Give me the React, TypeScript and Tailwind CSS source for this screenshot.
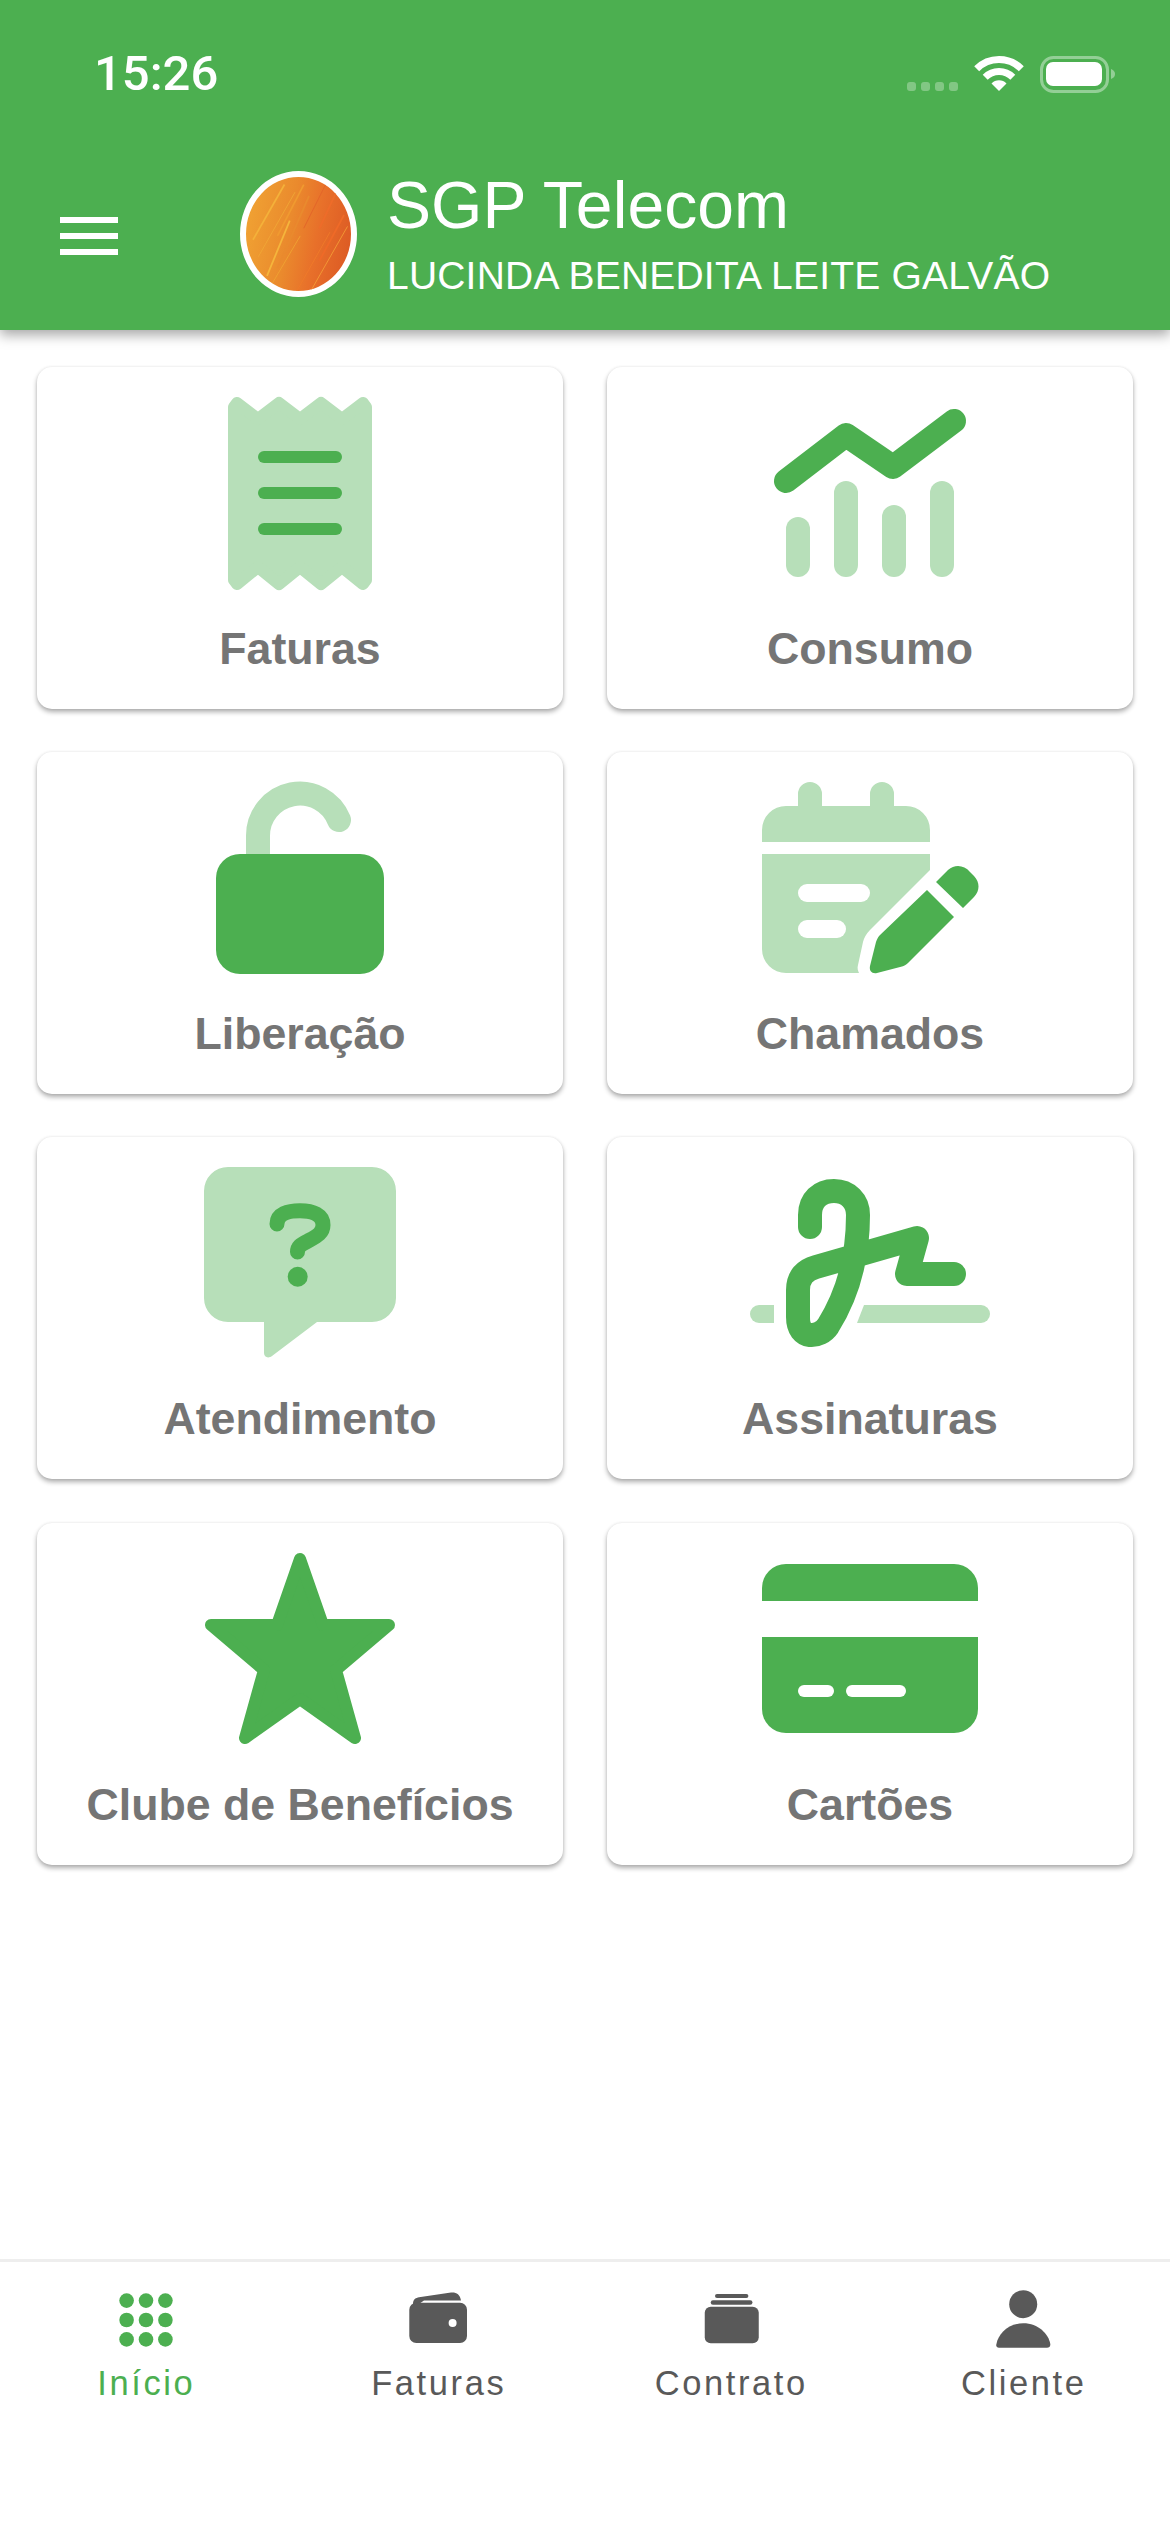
import type { ReactNode } from "react";

const GREEN = "#4caf50";
const LIGHT = "#b7dfb9";

const StatusIcons = () => (
  <svg width="220" height="50" viewBox="0 0 220 50" className="block">
    <g fill="#fff" fillOpacity="0.3">
      <rect x="7" y="32" width="9" height="9" rx="3" />
      <rect x="21" y="32" width="9" height="9" rx="3" />
      <rect x="35" y="32" width="9" height="9" rx="3" />
      <rect x="49" y="32" width="9" height="9" rx="3" />
    </g>
    <g fill="none" stroke="#fff" strokeWidth="7">
      <path d="M76.7 18.7A31.5 31.5 0 0 1 121.3 18.7" />
      <path d="M85.2 27.2A19.5 19.5 0 0 1 112.8 27.2" />
    </g>
    <path d="M99 41L91.5 33.5A10.5 10.5 0 0 1 106.5 33.5Z" fill="#fff" />
    <rect x="141.5" y="7.5" width="66" height="34" rx="12" fill="none" stroke="#fff" strokeOpacity="0.4" strokeWidth="3" />
    <rect x="146" y="12" width="56" height="24" rx="7" fill="#fff" />
    <path d="M211 19C214 20 215 22 215 24C215 26 214 28 211 29Z" fill="#fff" fillOpacity="0.4" />
  </svg>
);

const streaks: [number, number, number, number, string][] = [
  [8, 66, 44, 8, "#f4b13a"],
  [14, 84, 56, 16, "#f0a636"],
  [24, 104, 50, 46, "#f5b53c"],
  [30, 112, 62, 62, "#efa233"],
  [36, 96, 72, 20, "#e98a2e"],
  [58, 120, 96, 58, "#ee7a2a"],
  [66, 8, 36, 62, "#f09a30"],
  [74, 120, 116, 52, "#f39a36"],
  [84, 88, 112, 40, "#ef6a28"],
  [92, 6, 66, 54, "#e2642a"],
  [104, 14, 84, 54, "#ee6c2a"],
];

const Avatar = () => (
  <div className="h-[126px] w-[117px] shrink-0 overflow-hidden rounded-[50%] border-[6px] border-white bg-[linear-gradient(100deg,#f0a233_5%,#ea8a2d_42%,#e8702a_65%,#dc5a24_95%)]">
    <svg width="105" height="114" viewBox="0 0 120 120" preserveAspectRatio="none" className="block">
      {streaks.map(([x1, y1, x2, y2, c], i) => (
        <line key={i} x1={x1} y1={y1} x2={x2} y2={y2} stroke={c} strokeWidth={i % 2 ? 1 : 2} />
      ))}
    </svg>
  </div>
);

const IconBox = ({ children }: { children: ReactNode }) => (
  <svg width="240" height="216" viewBox="0 0 240 216" className="block shrink-0">
    {children}
  </svg>
);

const ReceiptIcon = () => (
  <IconBox>
    <path
      d="M54 28L57 24L78 40L99 24L120 40L141 24L162 40L183 24L186 28V201L183 205L162 188L141 205L120 188L99 205L78 188L57 205L54 201Z"
      fill={LIGHT}
      stroke={LIGHT}
      strokeWidth="12"
      strokeLinejoin="round"
    />
    <rect x="78" y="72" width="84" height="12" rx="6" fill={GREEN} />
    <rect x="78" y="108" width="84" height="12" rx="6" fill={GREEN} />
    <rect x="78" y="144" width="84" height="12" rx="6" fill={GREEN} />
  </IconBox>
);

const ChartIcon = () => (
  <IconBox>
    <path d="M36 102L96 56L143 88L204 42" fill="none" stroke={GREEN} strokeWidth="24" strokeLinecap="round" strokeLinejoin="round" />
    <g fill={LIGHT}>
      <rect x="36" y="138" width="24" height="60" rx="12" />
      <rect x="84" y="102" width="24" height="96" rx="12" />
      <rect x="132" y="126" width="24" height="72" rx="12" />
      <rect x="180" y="102" width="24" height="96" rx="12" />
    </g>
  </IconBox>
);

const LockIcon = () => (
  <IconBox>
    <path d="M78 95V72A42 42 0 0 1 159 56" fill="none" stroke={LIGHT} strokeWidth="24" strokeLinecap="round" />
    <rect x="36" y="90" width="168" height="120" rx="24" fill={GREEN} />
  </IconBox>
);

const NotesIcon = () => (
  <IconBox>
    <path
      d="M12 78V66A24 24 0 0 1 36 42H48V30A12 12 0 0 1 72 30V42H120V30A12 12 0 0 1 144 30V42H156A24 24 0 0 1 180 66V78Z"
      fill={LIGHT}
    />
    <path d="M12 90H180V106L120 166C116 170 114 174 113 178L108 201C107 204 108 207 109 209H36A24 24 0 0 1 12 185Z" fill={LIGHT} />
    <rect x="48" y="120" width="72" height="18" rx="9" fill="#fff" />
    <rect x="48" y="156" width="48" height="18" rx="9" fill="#fff" />
    <path d="M177 126L204 153L158 199C156 201 154 202 152 202.500L127 209C122 210 119 207 120 202L126 178C127 175 128 173 130 171Z" fill={GREEN} />
    <path d="M186 118L198 106C205 100 214 101 220 108L224 112C230 118 230 127 224 133L213 144Z" fill={GREEN} />
  </IconBox>
);

const HelpIcon = () => (
  <IconBox>
    <path
      d="M48 18H192A24 24 0 0 1 216 42V149A24 24 0 0 1 192 173H137L92 207C88 210 84 208 84 204V173H48A24 24 0 0 1 24 149V42A24 24 0 0 1 48 18Z"
      fill={LIGHT}
    />
    <path
      d="M97 75C97 65 108 61.700 120 61.700C133 61.700 143 66 143 76C143 84 137 87 128 92C120 96 117.500 98 117.500 103"
      fill="none"
      stroke={GREEN}
      strokeWidth="15"
      strokeLinecap="round"
    />
    <circle cx="117.700" cy="127.700" r="10" fill={GREEN} />
  </IconBox>
);

const SignIcon = () => (
  <IconBox>
    <path d="M24 156V174H9A9 9 0 0 1 9 156Z" fill={LIGHT} />
    <path d="M114 156H231A9 9 0 0 1 231 174H107Z" fill={LIGHT} />
    <path
      d="M60 78V66C60 51 70 42 84 42C98 42 108 52 108 66C108 110 98 145 78 177C70 189 48 192 48 168V141C48 128 55 121 66 118L167 89L157 125H204"
      fill="none"
      stroke={GREEN}
      strokeWidth="24"
      strokeLinecap="round"
      strokeLinejoin="round"
    />
  </IconBox>
);

const StarIcon = () => (
  <IconBox>
    <path
      d="M120 24L143 90H209L156 135L175 203L120 164L65 203L84 135L31 90H97Z"
      fill={GREEN}
      stroke={GREEN}
      strokeWidth="12"
      strokeLinejoin="round"
    />
  </IconBox>
);

const CardIcon = () => (
  <IconBox>
    <path d="M12 66V53A24 24 0 0 1 36 29H204A24 24 0 0 1 228 53V66Z" fill={GREEN} />
    <path d="M12 102H228V174A24 24 0 0 1 204 198H36A24 24 0 0 1 12 174Z" fill={GREEN} />
    <rect x="48" y="150" width="36" height="12" rx="6" fill="#fff" />
    <rect x="96" y="150" width="60" height="12" rx="6" fill="#fff" />
  </IconBox>
);

const tiles: { label: string; icon: ReactNode }[] = [
  { label: "Faturas", icon: <ReceiptIcon /> },
  { label: "Consumo", icon: <ChartIcon /> },
  { label: "Liberação", icon: <LockIcon /> },
  { label: "Chamados", icon: <NotesIcon /> },
  { label: "Atendimento", icon: <HelpIcon /> },
  { label: "Assinaturas", icon: <SignIcon /> },
  { label: "Clube de Benefícios", icon: <StarIcon /> },
  { label: "Cartões", icon: <CardIcon /> },
];

const HomeTab = () => (
  <svg width="72" height="72" viewBox="0 0 72 72" className="block" fill={GREEN}>
    {[16.6, 36, 55.4].map((y) =>
      [16.6, 36, 55.4].map((x) => <circle key={`${x}-${y}`} cx={x} cy={y} r="7.300" />)
    )}
  </svg>
);

const WalletTab = () => (
  <svg width="72" height="72" viewBox="0 0 72 72" className="block" fill="#595959">
    <path d="M10 20C10 15 13 14 16 13.300L48 8.500C53 8 57 10 58 16.500L21 16.500L10 24Z" />
    <path d="M13.300 18.700H57A7 7 0 0 1 64 25.700V52A7 7 0 0 1 57 59H13.300A7 7 0 0 1 6.300 52V25.700A7 7 0 0 1 13.300 18.700Z" />
    <circle cx="49.600" cy="39" r="4" fill="#fff" />
  </svg>
);

const FolderTab = () => (
  <svg width="72" height="72" viewBox="0 0 72 72" className="block" fill="#595959">
    <rect x="20" y="10" width="33.400" height="4" rx="2" />
    <rect x="15.750" y="16.300" width="41.700" height="4.400" rx="2.200" />
    <rect x="9.750" y="22.700" width="54" height="36.600" rx="6" />
  </svg>
);

const UserTab = () => (
  <svg width="72" height="72" viewBox="0 0 72 72" className="block" fill="#595959">
    <circle cx="35.200" cy="20.200" r="14" />
    <path d="M8.300 60.500C10 50 20 39.300 35.200 39.300C50.400 39.300 60.500 50 62.300 60C62.500 62.500 61 63.700 59 63.700H11C9 63.700 8 62.500 8.300 60.500Z" />
  </svg>
);

const tabs: { label: string; icon: ReactNode; active?: boolean }[] = [
  { label: "Início", icon: <HomeTab />, active: true },
  { label: "Faturas", icon: <WalletTab /> },
  { label: "Contrato", icon: <FolderTab /> },
  { label: "Cliente", icon: <UserTab /> },
];

export default function App() {
  return (
    <div className="flex h-[2532px] w-[1170px] flex-col overflow-hidden bg-white font-['Liberation_Sans',Arial,sans-serif]">
      <header className="relative z-10 flex h-[330px] flex-col justify-between bg-[#4caf50] text-white shadow-[0_5px_12px_rgba(0,0,0,0.35)]">
        <div className="flex items-start justify-between pt-[50px] pl-[94px] pr-[50px]">
          <span className="font-['Roboto',sans-serif] text-[49px] font-medium leading-[48px]">15:26</span>
          <StatusIcons />
        </div>
        <div className="flex items-center pb-[25px] pl-[60px]">
          <button className="mr-[122px] mt-[4px] flex w-[58px] flex-col gap-[10px]">
            <span className="h-[6px] bg-white" />
            <span className="h-[6px] bg-white" />
            <span className="h-[6px] bg-white" />
          </button>
          <Avatar />
          <div className="ml-[30px] flex flex-col pb-[6px]">
            <span className="text-[66px] leading-[84px] tracking-[0.1px]">SGP Telecom</span>
            <span className="mt-[6px] text-[39px] leading-[46px] tracking-[0.2px]">LUCINDA BENEDITA LEITE GALVÃO</span>
          </div>
        </div>
      </header>

      <main className="grid flex-1 grid-cols-2 content-start gap-x-[44px] gap-y-[43.2px] px-[37px] pt-[37px]">
        {tiles.map((t) => (
          <div
            key={t.label}
            className="flex h-[342px] flex-col items-center rounded-[15px] bg-white pt-[12px] shadow-[0_3px_5px_rgba(0,0,0,0.32),0_0_3px_rgba(0,0,0,0.07)]"
          >
            {t.icon}
            <span className="mt-[28px] text-[44.700px] font-bold leading-[52px] text-[#757575]">{t.label}</span>
          </div>
        ))}
      </main>

      <nav className="grid h-[273px] grid-cols-4 border-t-[3px] border-[#eeeeee] pt-[22px]">
        {tabs.map((t) => (
          <div key={t.label} className="flex flex-col items-center">
            {t.icon}
            <span
              className={`mt-[7px] text-[34.500px] leading-[40px] tracking-[2.600px] ${t.active ? "text-[#4caf50]" : "text-[#595959]"}`}
            >
              {t.label}
            </span>
          </div>
        ))}
      </nav>
    </div>
  );
}
